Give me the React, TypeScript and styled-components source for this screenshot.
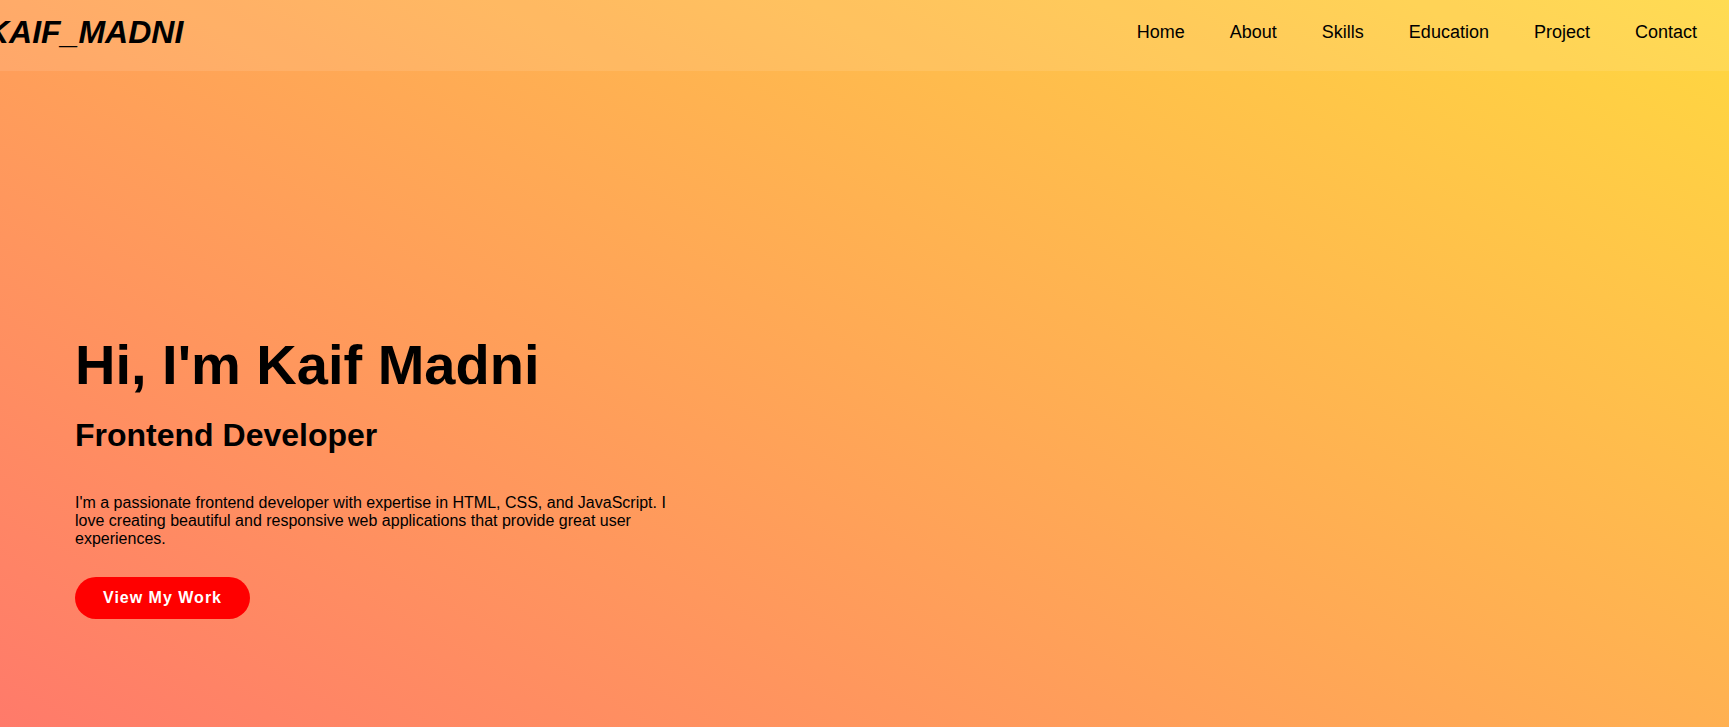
import React from "react";
import styled, { createGlobalStyle } from "styled-components";

const GlobalStyle = createGlobalStyle`
  * { box-sizing: border-box; }
  html, body { margin: 0; padding: 0; }
  body {
    font-family: "Liberation Sans", Arial, sans-serif;
    color: #000;
    overflow: hidden;
  }
`;

const Page = styled.div`
  min-height: 100vh;
  display: flex;
  flex-direction: column;
  background: linear-gradient(30deg, #ff7a6a 0%, #ffd840 100%);
`;

const Header = styled.header`
  height: 71px;
  padding: 14px 32px 20px;
  display: flex;
  align-items: center;
  justify-content: space-between;
  background: rgba(255, 255, 255, 0.1);
`;

const Logo = styled.div`
  margin-left: -46px;
  font-size: 32px;
  font-weight: 700;
  font-style: italic;
  white-space: nowrap;
`;

const NavList = styled.nav`
  display: flex;
  gap: 45px;
`;

const NavLink = styled.a`
  font-size: 18px;
  color: #000;
  text-decoration: none;
`;

const Hero = styled.section`
  flex: 1;
  padding: 261px 75px 0;
  display: flex;
  flex-direction: column;
  align-items: flex-start;
`;

const Title = styled.h1`
  margin: 0;
  font-size: 56px;
  font-weight: 700;
`;

const Subtitle = styled.h2`
  margin: 20px 0 0;
  font-size: 32px;
  font-weight: 700;
`;

const Intro = styled.p`
  margin: 40px 0 0;
  max-width: 600px;
  font-size: 16px;
`;

const CtaButton = styled.a`
  margin-top: 29px;
  padding: 12px 28px;
  border-radius: 30px;
  background: #ff0000;
  color: #fff;
  font-size: 16px;
  font-weight: 700;
  letter-spacing: 1px;
  text-decoration: none;
`;

const links = ["Home", "About", "Skills", "Education", "Project", "Contact"];

export default function App() {
  return (
    <>
      <GlobalStyle />
      <Page>
        <Header>
          <Logo>KAIF_MADNI</Logo>
          <NavList>
            {links.map((l) => (
              <NavLink key={l} href="#">
                {l}
              </NavLink>
            ))}
          </NavList>
        </Header>
        <Hero>
          <Title>Hi, I'm Kaif Madni</Title>
          <Subtitle>Frontend Developer</Subtitle>
          <Intro>
            I'm a passionate frontend developer with expertise in HTML, CSS, and JavaScript. I love
            creating beautiful and responsive web applications that provide great user experiences.
          </Intro>
          <CtaButton href="#">View My Work</CtaButton>
        </Hero>
      </Page>
    </>
  );
}
